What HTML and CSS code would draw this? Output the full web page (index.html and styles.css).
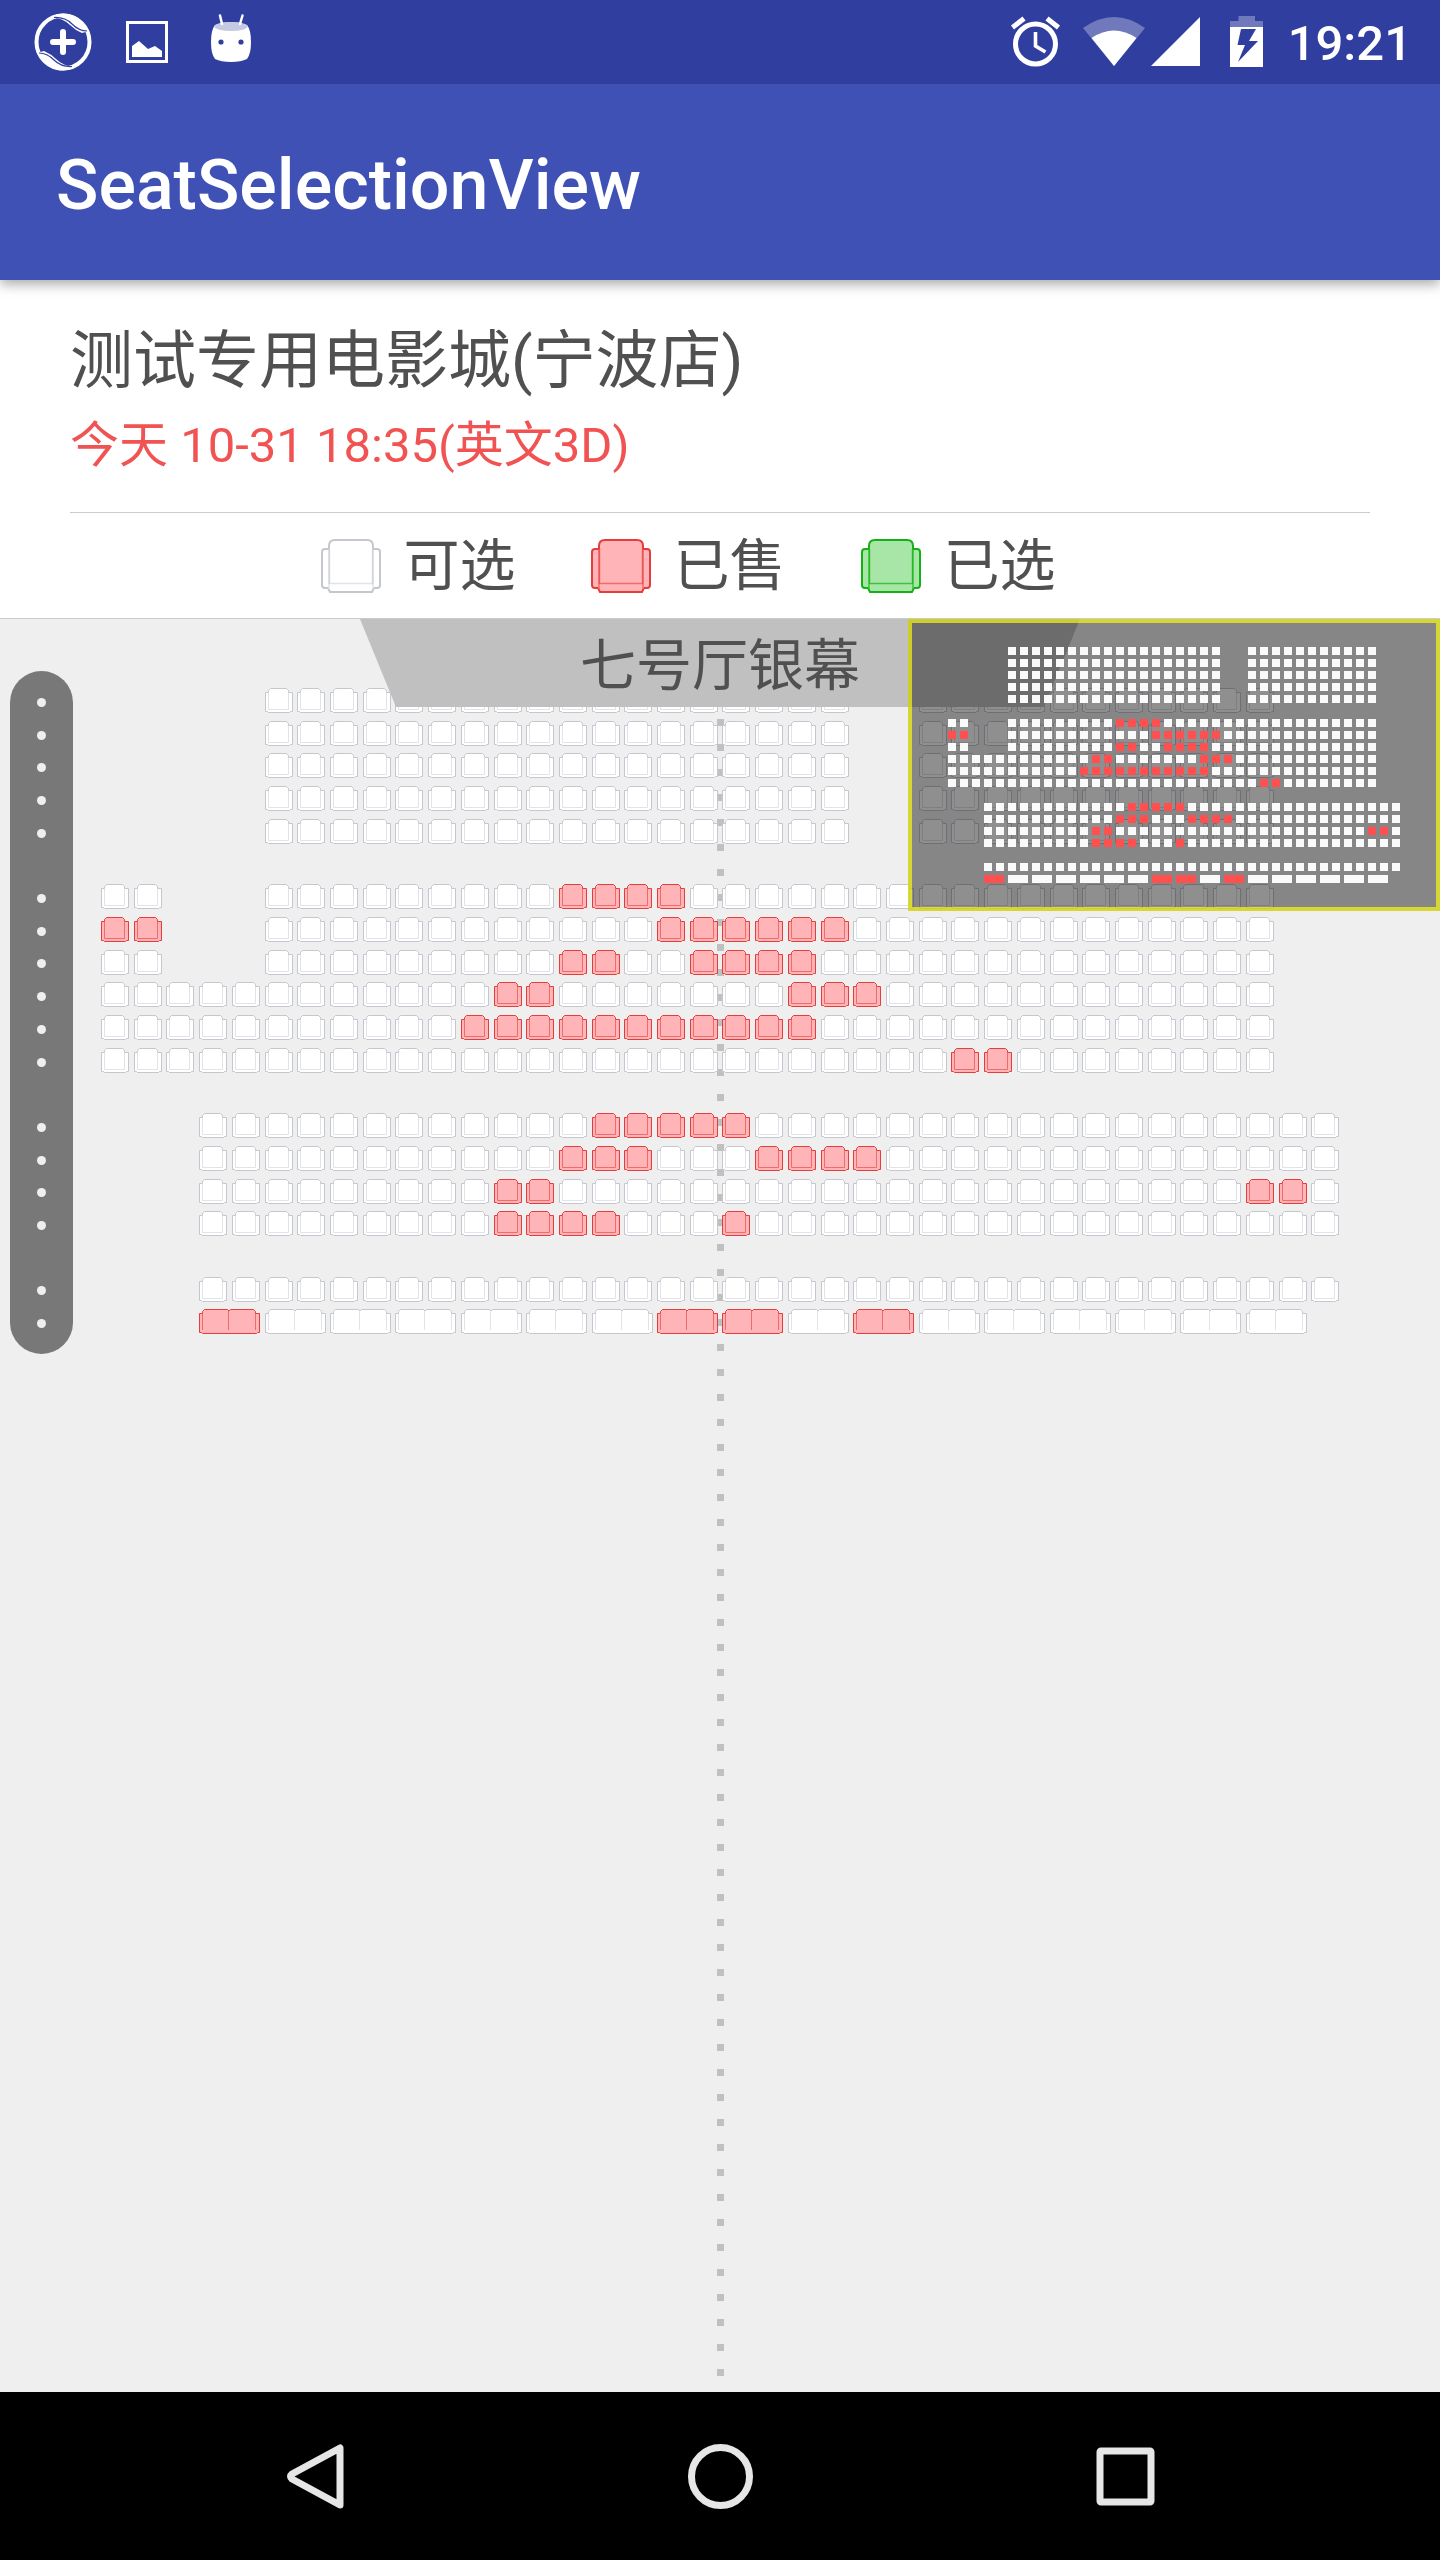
FILE: index.html
```html
<!DOCTYPE html>
<html lang="zh-CN">
<head>
<meta charset="utf-8">
<meta name="viewport" content="width=device-width, initial-scale=1">
<title>SeatSelectionView</title>
<link rel="stylesheet" href="styles.css">
</head>
<body>
<svg class="defs" aria-hidden="true">
  <symbol id="seat-large" viewBox="0 0 60 54">
    <path class="seat-body" d="M8 10V7Q8 1 14 1H46Q52 1 52 7V10H56Q59 10 59 13V46Q59 49 56 49H53L51 53H9L7 49H4Q1 49 1 46V13Q1 10 4 10Z" stroke-width="2"/>
    <path class="seat-inner" d="M8.500 10V44.500H51.500V10M8 45V50M52 45V50" stroke-width="1.500"/>
    <path class="seat-edge" d="M8 10V45M52 10V45" stroke-width="1"/>
  </symbol>
  <symbol id="seat" viewBox="0 0 28 25">
    <path class="seat-body" d="M3.500 4.500V2.500L5.500 .5H21.500L23.500 2.500V4.500H27.500V23.500H25.500L24.500 24.500H3.500L2.500 23.500H.5V4.500Z"/>
    <path class="seat-inner" d="M3.500 5V21.500H23.500V5"/>
  </symbol>
  <symbol id="seat-double" viewBox="0 0 61 25">
    <path class="seat-body" d="M3.500 4.500V2.500L5.500 .5H28.500L30 2L31.500 .5H54.500L56.500 2.500V4.500H60.500V23.500H58.500L57.500 24.500H3.500L2.500 23.500H.5V4.500Z"/>
    <path class="seat-inner" d="M3.500 5V21M56.500 5V21M29.500 2V21"/>
  </symbol>
</svg>

<header class="top">
  <div class="status">
    <div class="status-left">
      <svg class="tile" viewBox="0 0 84 84" aria-hidden="true">
        <circle cx="42" cy="42" r="26.500" fill="none" stroke="#fff" stroke-width="4"/>
        <path d="M30 17Q38 12 48 14Q62 18 68 31L61 33Q54 30 49 25Q42 18 30 17ZM54 67Q46 72 36 70Q22 66 16 53L23 51Q30 54 35 59Q42 66 54 67Z" fill="#fff"/>
        <path d="M33 17.500Q44 17 51 24T66 31M51 66.500Q40 67 33 60T18 53" fill="none" stroke="#303f9f" stroke-width="1.200"/>
        <path d="M42 32V52M32 42H52" stroke="#fff" stroke-width="6" stroke-linecap="round"/>
      </svg>
      <svg class="tile" viewBox="0 0 84 84" aria-hidden="true">
        <path d="M22.500 22.500H61.500V61.500H22.500Z" fill="none" stroke="#fff" stroke-width="3"/>
        <path d="M27 46L34 41L43 49L50 46L57 51V57H27Z" fill="#fff"/>
      </svg>
      <svg class="tile" viewBox="0 0 84 84" aria-hidden="true">
        <path d="M26 25Q42 19 58 25Q62 30 62 42Q62 54 58 59Q52 62 42 62Q32 62 26 59Q22 54 22 42Q22 30 26 25Z" fill="#fff"/>
        <ellipse cx="42" cy="26.500" rx="16.500" ry="4.500" fill="#c5cae3"/>
        <path d="M31 15.500L33 24M53.500 15.500L51 24" stroke="#fff" stroke-width="2.500" stroke-linecap="round"/>
        <circle cx="32" cy="42" r="2.600" fill="#303f9f"/><circle cx="52" cy="42" r="2.600" fill="#303f9f"/>
      </svg>
    </div>
    <div class="status-right">
      <svg class="alarm" viewBox="0 0 50 52" aria-hidden="true">
        <circle cx="24.500" cy="28" r="20" fill="none" stroke="#fff" stroke-width="5"/>
        <path d="M24.500 16V30L34.500 36" fill="none" stroke="#fff" stroke-width="3.600"/>
        <path d="M1.500 11.500L13 2.500M36 2.500L47.500 11.500" stroke="#fff" stroke-width="5"/>
      </svg>
      <svg class="wifi" viewBox="0 0 62 52" aria-hidden="true">
        <path d="M31 50L0 12Q31-10 62 12Z" fill="#7079bc"/>
        <path d="M31 50L8.500 22Q31 7 53.500 22Z" fill="#fff"/>
      </svg>
      <svg class="signal" viewBox="0 0 50 52" aria-hidden="true"><path d="M0 50L49 1V50Z" fill="#fff"/></svg>
      <svg class="battery" viewBox="0 0 34 52" aria-hidden="true">
        <path d="M0 12V5H8.500V0H25V5H33V12Z" fill="#7079bc"/>
        <path d="M0 11H33V51H0Z" fill="#fff"/>
        <path d="M11 13H26L19 25H28L8 46L15 29H7.500Z" fill="#303f9f"/>
      </svg>
      <time class="clock">19:21</time>
    </div>
  </div>
  <h1 class="app-title">SeatSelectionView</h1>
</header>

<section class="info">
  <h2 class="cinema">测试专用电影城(宁波店)</h2>
  <p class="session">今天 10-31 18:35(英文3D)</p>
  <ul class="legend">
    <li class="legend-item"><svg class="free" viewBox="0 0 60 54"><use href="#seat-large"/></svg>可选</li>
    <li class="legend-item"><svg class="sold" viewBox="0 0 60 54"><use href="#seat-large"/></svg>已售</li>
    <li class="legend-item"><svg class="chosen" viewBox="0 0 60 54"><use href="#seat-large"/></svg>已选</li>
  </ul>
</section>

<main class="hall">
  <div class="seats" id="seats"></div>
  <div class="screen">七号厅银幕</div>
  <ol class="rows" id="rows"></ol>
  <svg class="overview" id="overview" viewBox="0 0 524 284" aria-hidden="true"></svg>
</main>

<nav class="nav">
  <button class="nav-button" type="button" aria-label="返回"><svg viewBox="0 0 84 84"><path d="M67 14V71L19 45Q16 42.500 19 40Z" fill="none" stroke="#e6e6e6" stroke-width="7" stroke-linejoin="round"/></svg></button>
  <button class="nav-button" type="button" aria-label="主屏幕"><svg viewBox="0 0 84 84"><circle cx="42.500" cy="42.500" r="29" fill="none" stroke="#e6e6e6" stroke-width="7"/></svg></button>
  <button class="nav-button" type="button" aria-label="最近任务"><svg viewBox="0 0 84 84"><rect x="17" y="17" width="51" height="51" rx="1" fill="none" stroke="#e6e6e6" stroke-width="7" stroke-linejoin="round"/></svg></button>
</nav>
<script src="hall.js"></script>
</body>
</html>
```
FILE: styles.css
```css
* { box-sizing: border-box; }

body {
  margin: 0;
  min-height: 100vh;
  display: flex;
  flex-direction: column;
  background: #efefef;
  color: #505050;
  font-family: Roboto, "Noto Sans CJK SC", sans-serif;
}

h1, h2, p, ul, ol { margin: 0; padding: 0; font-weight: 400; list-style: none; }
svg { display: block; flex: none; }
button { border: 0; padding: 0; background: none; }
.defs { position: absolute; width: 0; height: 0; }

.top {
  position: relative;
  z-index: 1;
  background: #3f51b5;
  color: #fff;
  box-shadow: 0 4px 12px rgba(0, 0, 0, .35);
}
.status {
  height: 84px;
  padding: 0 28px 0 21px;
  display: flex;
  justify-content: space-between;
  background: #303f9f;
}
.status-left, .status-right { display: flex; align-items: center; }
.tile { width: 84px; height: 84px; }
.alarm, .signal { width: 50px; height: 52px; }
.wifi { width: 62px; height: 52px; margin: 0 6px 0 22px; }
.battery { width: 34px; height: 52px; margin: 0 24px 0 29px; }
.clock { padding-top: 4px; font-size: 49px; line-height: 56px; font-weight: 500; }
.app-title {
  padding: 6px 56px 0;
  font-size: 70px;
  line-height: 190px;
  font-weight: 500;
  white-space: nowrap;
}

.info {
  padding: 37px 70px 0;
  background: #fff;
  border-bottom: 1px solid #ccc;
}
.cinema { font-size: 63px; line-height: 88px; }
.session { padding-bottom: 25px; font-size: 49px; line-height: 82px; color: #f15353; }
.legend {
  display: flex;
  justify-content: center;
  gap: 75px;
  height: 106px;
  padding-right: 64px;
  align-items: center;
  border-top: 1px solid #ccc;
  font-size: 56px;
  line-height: 80px;
}
.legend-item { display: flex; align-items: center; gap: 23px; white-space: nowrap; }
.legend-item svg { width: 60px; height: 54px; }

.seat-body { fill: var(--fill); stroke: var(--line); }
.seat-inner { fill: none; stroke: var(--inner); }
.seat-edge { fill: none; stroke: var(--line); }
.free { --fill: #fff; --line: #c5c7cf; --inner: #e2e3e8; }
.sold { --fill: #ffb5b7; --line: #e53c3c; --inner: #f06c6c; }
.chosen { --fill: #a8e6a8; --line: #13b113; --inner: #3fc23f; }

.hall {
  position: relative;
  flex: 1;
  padding: 69px 96px 40px 101px;
}
/* Aisle guide down the centre of the hall */
.hall::before {
  content: "";
  position: absolute;
  top: 0;
  bottom: 0;
  left: calc(50% - 3px);
  width: 7px;
  background: repeating-linear-gradient(#c0c0c0 0 7px, transparent 7px 25px);
}
.seats {
  position: relative;
  display: grid;
  grid-template-columns: repeat(38, minmax(0, 1fr));
  grid-template-rows: repeat(20, minmax(0, 1fr));
  height: 654px;
}
.seat { width: 28px; height: 25px; }
.seat.double { width: 61px; }
.seat svg { width: 100%; height: 100%; }

.screen {
  position: absolute;
  top: 0;
  left: 25%;
  width: 50%;
  height: 88px;
  background: #c0c0c0;
  clip-path: polygon(0 0, 100% 0, calc(100% - 36px) 100%, 36px 100%);
  font-size: 56px;
  line-height: 94px;
  text-align: center;
}
.rows {
  position: absolute;
  top: 52px;
  left: 10px;
  width: 63px;
  height: 683px;
  padding: 15px 0 14px;
  display: grid;
  grid-template-rows: repeat(20, 1fr);
  place-items: center;
  border-radius: 32px;
  background: #787878;
}
.row-mark { width: 9px; height: 9px; border-radius: 50%; background: #efefef; }

.overview {
  position: absolute;
  top: 0;
  right: 0;
  width: 532px;
  height: 292px;
  border: 4px solid rgba(208, 208, 5, .8);
  background: rgba(0, 0, 0, .44) padding-box;
}

.nav {
  height: 168px;
  display: flex;
  justify-content: center;
  background: #000;
}
.nav-button {
  flex: 0 1 405px;
  display: flex;
  align-items: center;
  justify-content: center;
}
.nav-button svg { width: 84px; height: 84px; }
```
FILE: hall.js
```javascript
// Each row: [row index, free and sold seat ranges, sold ranges, couple seats?]
const front = [[5, 22], [25, 35]];
const plan = [
  [0, front, []], [1, front, []], [2, front, []], [3, front, []], [4, front, []],
  [6, [[0, 1], [5, 35]], [[14, 17]]],
  [7, [[0, 1], [5, 35]], [[0, 1], [17, 22]]],
  [8, [[0, 1], [5, 35]], [[14, 15], [18, 21]]],
  [9, [[0, 35]], [[12, 13], [21, 23]]],
  [10, [[0, 35]], [[11, 21]]],
  [11, [[0, 35]], [[26, 27]]],
  [13, [[3, 37]], [[15, 19]]],
  [14, [[3, 37]], [[14, 16], [20, 23]]],
  [15, [[3, 37]], [[12, 13], [35, 36]]],
  [16, [[3, 37]], [[12, 15], [19, 19]]],
  [18, [[3, 37]], []],
  [19, [[3, 35]], [[3, 3], [17, 19], [23, 23]], true]
];

const within = (ranges, n) => ranges.some(([a, b]) => n >= a && n <= b);
let seats = '', marks = '', blocks = '';

for (const [row, ranges, sold, couple] of plan) {
  marks += `<li class="row-mark" style="grid-row:${row + 1}"></li>`;
  for (const [from, to] of ranges) {
    for (let col = from; col <= to; col += couple ? 2 : 1) {
      const taken = within(sold, col);
      seats += `<button type="button" class="seat ${taken ? 'sold' : 'free'}${couple ? ' double' : ''}"` +
        ` style="grid-area:${row + 1}/${col + 1}" aria-label="${row + 1}排${col + 1}座"${taken ? ' disabled' : ''}>` +
        `<svg viewBox="0 0 ${couple ? 61 : 28} 25"><use href="#seat${couple ? '-double' : ''}"/></svg></button>`;
      blocks += `<rect x="${36 + col * 12}" y="${24 + row * 12}" width="${couple ? 20 : 8}" height="8"` +
        ` fill="${taken ? '#ff504f' : '#fafafa'}"/>`;
    }
  }
}

document.getElementById('seats').innerHTML = seats;
document.getElementById('rows').innerHTML = marks;
document.getElementById('overview').innerHTML = blocks;

document.getElementById('seats').addEventListener('click', (event) => {
  const seat = event.target.closest('.seat:not(.sold)');
  if (!seat) return;
  seat.classList.toggle('free');
  seat.classList.toggle('chosen');
});
```
